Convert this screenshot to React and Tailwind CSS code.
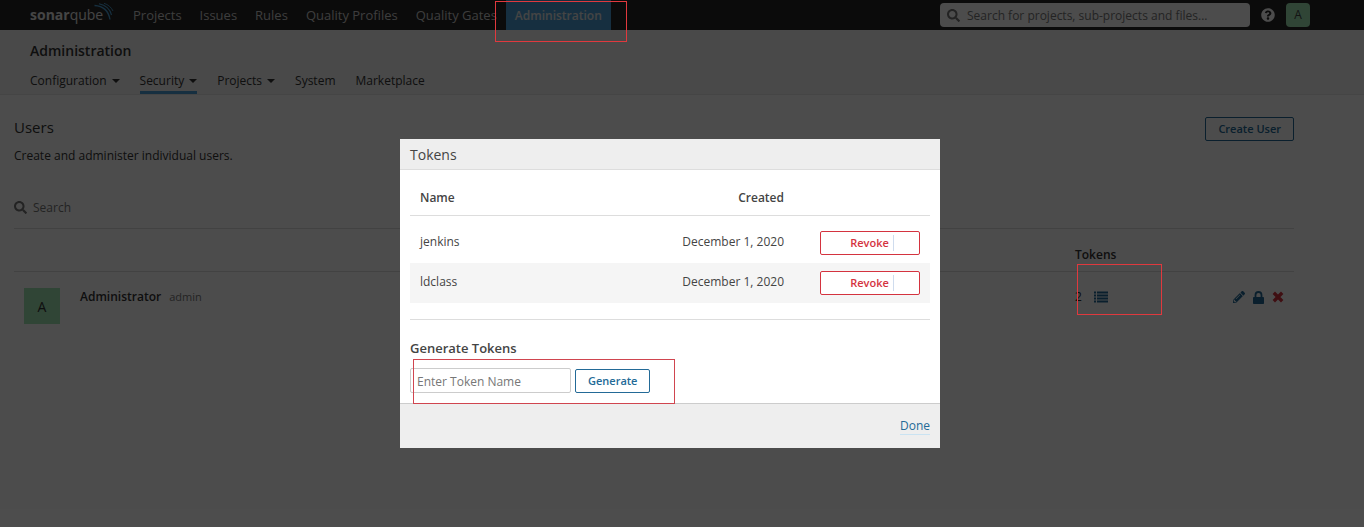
import { FaPencilAlt, FaQuestionCircle, FaSearch } from "react-icons/fa";

const NAV = ["Projects", "Issues", "Rules", "Quality Profiles", "Quality Gates"];
const TOKENS = [
  { name: "jenkins", created: "December 1, 2020" },
  { name: "ldclass", created: "December 1, 2020" },
];

function Logo() {
  return (
    <svg viewBox="0 0 84 24" className="h-6 w-[84px]" role="img" aria-label="sonarqube">
      <text x="0" y="17" fontSize="15" fontWeight="700" fill="#e6e6e6" fontFamily="Open Sans, sans-serif" textAnchor="start">
        <tspan fontSize="14">sonar</tspan>
        <tspan fontSize="14" fontWeight="400">qube</tspan>
      </text>
      <g fill="none" stroke="#4b9fd5">
        <path d="M64.500 2.500C73 3 78.500 8 80 16.500" strokeWidth="1.400" />
        <path d="M69 .8C75 2 80 6 81.500 12" strokeWidth="1.100" />
        <path d="M74 .3C78 1.500 81.500 4.500 83 8" strokeWidth=".9" />
      </g>
    </svg>
  );
}

function Caret() {
  return (
    <svg viewBox="0 0 8 4" className="h-1 w-2" fill="currentColor" aria-hidden="true">
      <path d="M0 0h8L4 4z" />
    </svg>
  );
}

function ListIcon() {
  return (
    <svg viewBox="0 0 14 12" className="h-3 w-[14px]" fill="currentColor" aria-hidden="true">
      <path d="M0 .5h2v2H0zM3 .5h11v2H3zM0 3.500h2v2H0zM3 3.500h11v2H3zM0 6.500h2v2H0zM3 6.500h11v2H3zM0 9.500h2v2H0zM3 9.500h11v2H3z" />
    </svg>
  );
}

function LockIcon() {
  return (
    <svg viewBox="0 0 11 13" className="h-[13px] w-[11px]" aria-hidden="true">
      <rect x="0" y="6" width="11" height="7" rx=".8" fill="currentColor" />
      <path d="M2.500 6.500V4a3 3 0 0 1 6 0v2.500" fill="none" stroke="currentColor" strokeWidth="1.800" />
    </svg>
  );
}

function CrossIcon() {
  return (
    <svg viewBox="0 0 12 12" className="size-3" fill="none" stroke="currentColor" strokeWidth="3.400" aria-hidden="true">
      <path d="M1.800 1.800l8.400 8.400M10.200 1.800L1.800 10.200" />
    </svg>
  );
}

function TopBar() {
  return (
    <header className="flex h-[30px] items-stretch bg-[#262626] pr-[54px] pl-[30px] text-[#ccc]">
      <div className="flex w-[94px] items-center"><Logo /></div>
      <nav className="flex flex-1 items-stretch text-[13px]">
        {NAV.map((n) => (
          <a key={n} href="#" className="flex items-center px-[9px] pt-[2px]">{n}</a>
        ))}
        <a href="#" className="flex items-center bg-[#4b9fd5] px-[9px] pt-[2px] text-[12px] font-semibold text-[#e6e6e6]">Administration</a>
      </nav>
      <div className="flex items-center gap-[11px]">
        <label className="flex h-6 w-[310px] items-center gap-[7px] rounded-sm bg-white px-[7px] text-[#777]">
          <FaSearch className="size-[13px] shrink-0" />
          <input
            aria-label="Search for projects"
            placeholder="Search for projects, sub-projects and files..."
            className="min-w-0 flex-1 bg-transparent pt-[2px] text-[12px] outline-none placeholder:text-[#777]"
          />
        </label>
        <button aria-label="Help"><FaQuestionCircle className="size-[14px] text-white" /></button>
        <button className="size-6 rounded-sm bg-[#a0e6b4] text-[#444]">A</button>
      </div>
    </header>
  );
}

function SubNav() {
  const item = "flex items-center gap-[5px] border-b-[3px] border-transparent pt-[2px]";
  return (
    <div className="border-b border-[#e6e6e6] bg-[#f3f3f3] px-[30px] pt-[10px]">
      <h1 className="text-[14px] leading-[22px] font-semibold">Administration</h1>
      <nav className="mt-[6px] flex h-[26px] gap-5">
        <a href="#" className={item}>Configuration<Caret /></a>
        <a href="#" className="flex items-center gap-[5px] border-b-[3px] border-[#4b9fd5] pt-[2px]">Security<Caret /></a>
        <a href="#" className={item}>Projects<Caret /></a>
        <a href="#" className={item}>System</a>
        <a href="#" className={item}>Marketplace</a>
      </nav>
    </div>
  );
}

function Users() {
  return (
    <main className="py-[22px] pr-[70px] pl-[14px]">
      <div className="flex items-start justify-between">
        <div>
          <h2 className="text-[15px] leading-5">Users</h2>
          <p className="mt-2 leading-[22px]">Create and administer individual users.</p>
        </div>
        <button className="h-6 rounded-xs border border-[#236a97] px-3 text-[11px] font-semibold text-[#236a97]">Create User</button>
      </div>
      <label className="mt-7 flex h-6 items-center gap-[6px] text-[#777]">
        <FaSearch className="size-[13px]" />
        <input aria-label="Search users" placeholder="Search" className="bg-transparent pt-[2px] outline-none placeholder:text-[#777]" />
      </label>
      <table className="mt-[9px] w-full table-fixed border-collapse border-t border-[#ddd]">
        <colgroup>
          <col className="w-[56px]" />
          <col />
          <col className="w-[130px]" />
          <col className="w-[99px]" />
        </colgroup>
        <thead>
          <tr className="h-[43px] border-b border-[#ddd] text-left">
            <th />
            <th />
            <th className="pt-[10px] pl-[10px] font-semibold">Tokens</th>
            <th />
          </tr>
        </thead>
        <tbody>
          <tr className="align-top">
            <td className="pt-4 pl-[10px]">
              <div className="flex size-9 items-center justify-center bg-[#a0e6b4] text-[14px]">A</div>
            </td>
            <td className="pt-[15px] pl-[10px] leading-5">
              <span className="font-semibold">Administrator</span>
              <span className="ml-2 text-[11px] text-[#777]">admin</span>
            </td>
            <td className="pt-[15px] pl-[10px] leading-5">
              <span className="flex items-center gap-3">
                2<button aria-label="Update tokens" className="text-[#236a97]"><ListIcon /></button>
              </span>
            </td>
            <td className="pt-[15px] pr-[10px]">
              <span className="flex h-5 items-center justify-end gap-2 text-[#236a97]">
                <button aria-label="Update user"><FaPencilAlt className="size-3" /></button>
                <button aria-label="Change password"><LockIcon /></button>
                <button aria-label="Deactivate user" className="text-[#d4333f]"><CrossIcon /></button>
              </span>
            </td>
          </tr>
        </tbody>
      </table>
    </main>
  );
}

function TokensDialog() {
  return (
    <section role="dialog" aria-label="Tokens" className="w-[540px] bg-white">
      <header className="border-b border-[#ddd] bg-[#eee] px-[10px] pt-[5px] pb-[3px]">
        <h2 className="text-[14px] leading-[22px]">Tokens</h2>
      </header>
      <div className="px-[10px] py-[10px]">
        <table className="w-full border-collapse">
          <thead>
            <tr className="h-[35px] border-b border-[#ddd]">
              <th className="px-[10px] pt-[2px] text-left font-semibold">Name</th>
              <th className="px-[10px] pt-[2px] text-right font-semibold">Created</th>
              <th className="w-[136px]" />
            </tr>
          </thead>
          <tbody>
            <tr className="h-2"><td /></tr>
            {TOKENS.map((t, i) => (
              <tr key={t.name} className={i % 2 ? "h-10 bg-[#f5f5f5] align-top" : "h-10 align-top"}>
                <td className="px-[10px] pt-2 leading-[22px]">{t.name}</td>
                <td className="px-[10px] pt-2 text-right leading-[22px]">{t.created}</td>
                <td className="pt-2 pr-[10px] pl-[26px]">
                  <button className="flex h-6 w-full items-center justify-center gap-1 rounded-xs border border-[#d4333f] bg-white pl-1 text-[11px] font-semibold text-[#d4333f]">
                    Revoke<span className="h-4 w-px bg-[#cfdcee]" />
                  </button>
                </td>
              </tr>
            ))}
          </tbody>
        </table>
        <hr className="mt-4 border-[#ddd]" />
        <h3 className="mt-[18px] text-[13px] leading-5 font-semibold">Generate Tokens</h3>
        <form className="mt-[10px] flex items-end gap-1">
          <input
            aria-label="Token name"
            placeholder="Enter Token Name"
            className="h-[25px] w-[161px] rounded-xs border border-[#ccc] px-[6px] pt-[2px] outline-none placeholder:text-[#777]"
          />
          <button type="button" className="h-6 rounded-xs border border-[#236a97] px-3 text-[11px] font-semibold text-[#236a97]">Generate</button>
        </form>
      </div>
      <footer className="flex h-[45px] items-center justify-end border-t border-[#ccc] bg-[#eee] px-[10px]">
        <a href="#" className="border-b border-[#cae3f2] leading-4 text-[#236a97]">Done</a>
      </footer>
    </section>
  );
}

export default function App() {
  return (
    <div className="relative min-h-screen bg-white font-['Open_Sans',sans-serif] text-[12px] text-[#333]">
      <TopBar />
      <SubNav />
      <Users />
      <div className="absolute inset-0 flex items-start justify-center bg-black/70 pt-[139px] pr-6 text-[#444]">
        <TokensDialog />
      </div>
      <div className="pointer-events-none absolute top-[1px] left-[495px] h-[41px] w-[132px] border border-[#e0393e]" />
      <div className="pointer-events-none absolute top-[264px] left-[1077px] h-[51px] w-[85px] border border-[#e0393e]" />
      <div className="pointer-events-none absolute top-[359px] left-[413px] h-[45px] w-[262px] border border-[#d0454f]" />
    </div>
  );
}
